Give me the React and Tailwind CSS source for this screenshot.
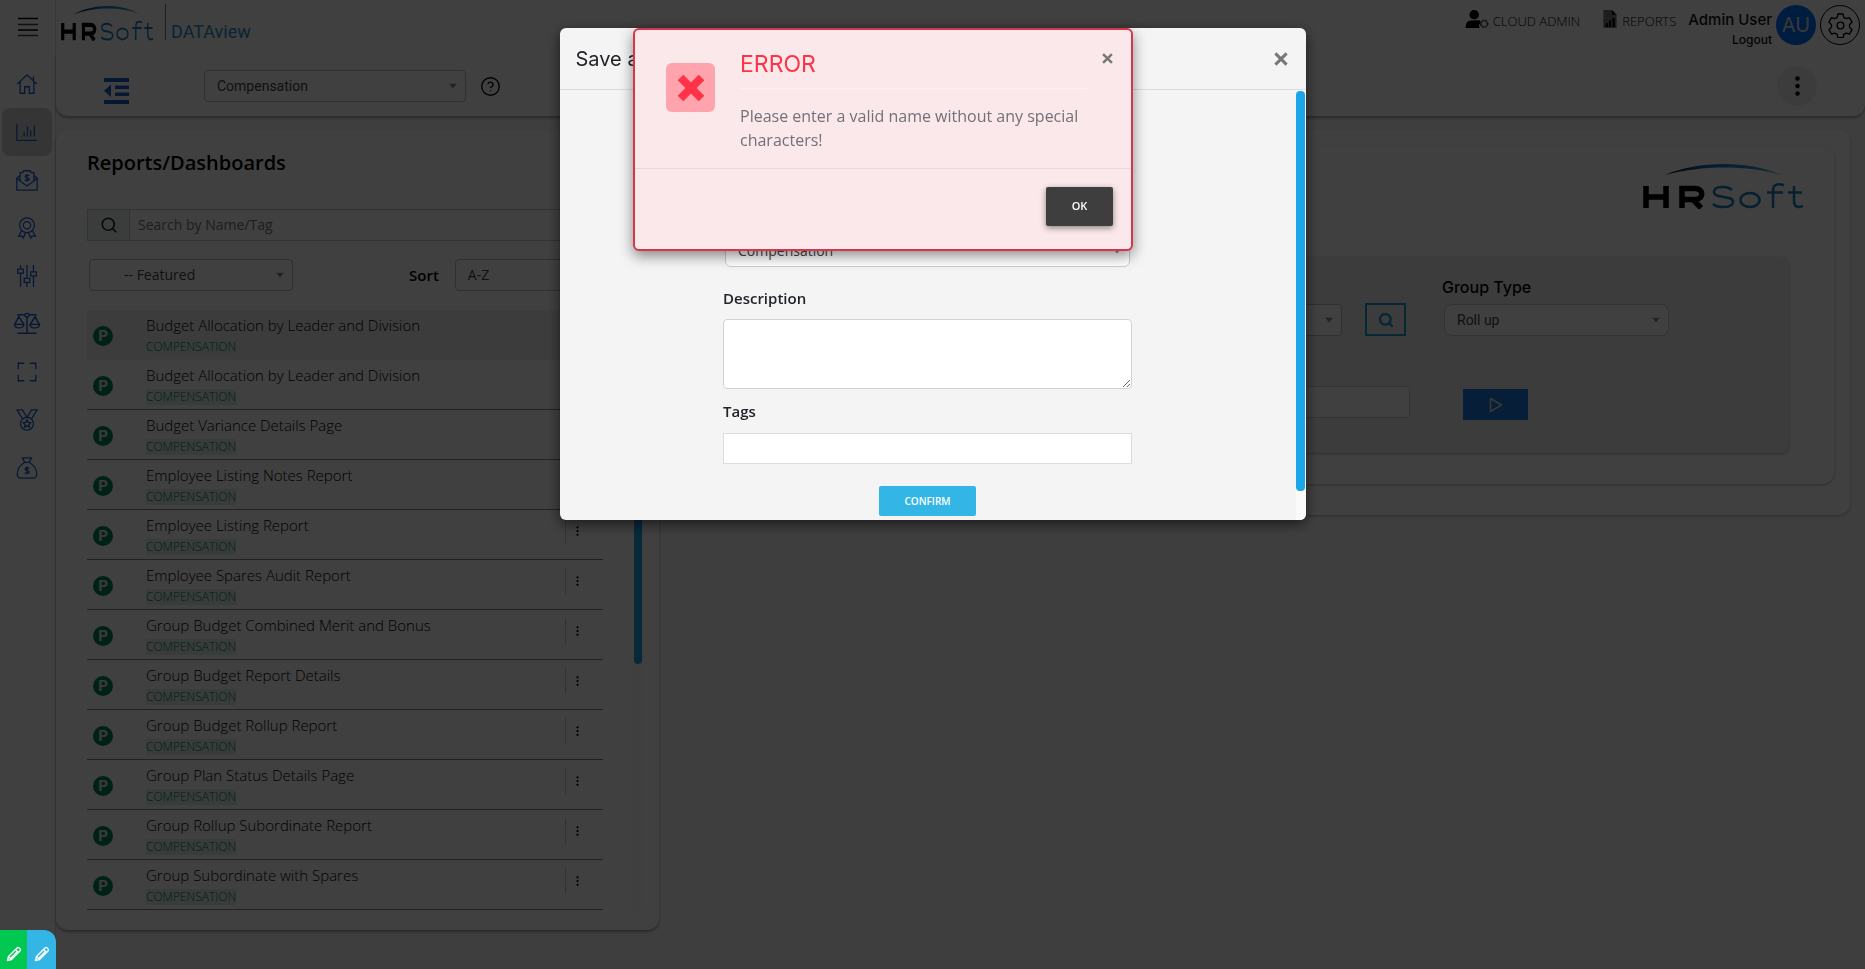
import React from "react";
import { Search, HelpCircle } from "lucide-react";

const reports = [
  "Budget Allocation by Leader and Division",
  "Budget Allocation by Leader and Division",
  "Budget Variance Details Page",
  "Employee Listing Notes Report",
  "Employee Listing Report",
  "Employee Spares Audit Report",
  "Group Budget Combined Merit and Bonus",
  "Group Budget Report Details",
  "Group Budget Rollup Report",
  "Group Plan Status Details Page",
  "Group Rollup Subordinate Report",
  "Group Subordinate with Spares",
];

const navIcons = [
  {
    name: "Home",
    art: <path d="M1.5 12 12 2l10.5 10M4.5 9.5V22h5v-7h5v7h5V9.5M19 4v4.5" />,
  },
  {
    name: "Dashboards",
    art: <path d="M1 3v18h22M6 16v1M9 12v5M12.500 6v11M16 10v7M20 5v12" />,
  },
  {
    name: "Pay letters",
    art: (
      <>
        <path d="M4.500 7 1 10v13h22V10l-3.500-3M1 10l7.500 6M23 10l-7.500 6M4.500 13V4h3l1-2h7l1 2h3v9L12 18.500z" />
        <path d="M14.500 7.500c-.5-1-4.500-1.300-4.500.7s4.500 1 4.500 3-4 2-5 .5M12 5.500v8" />
      </>
    ),
  },
  {
    name: "Awards",
    art: (
      <>
        <circle cx="12" cy="9" r="8" />
        <circle cx="12" cy="9" r="4" />
        <path d="m6 15-3 6 3.500-.5L8 23l2.500-6M18 15l3 6-3.500-.5L16 23l-2.500-6" />
      </>
    ),
  },
  {
    name: "Adjustments",
    art: (
      <>
        <path d="M5 0v4M5 9v15M12 0v14M12 19v5M19 0v7M19 12v12" />
        <rect x="2" y="4.500" width="6" height="4.500" />
        <rect x="9" y="14.500" width="6" height="4.500" />
        <rect x="16" y="7.500" width="6" height="4.500" />
      </>
    ),
  },
  {
    name: "Fairness",
    wide: true,
    art: (
      <>
        <path d="M3 2h7M14 2h7M12 4v18M3 22h18" />
        <circle cx="12" cy="2.500" r="2" />
        <path d="M4.500 4 .5 12.500h8.500zM19.500 4l-4.500 8.500h8.500z" />
        <path d="M.5 12.500c0 5 8.500 5 8.500 0M15 12.500c0 5 8.500 5 8.500 0" />
      </>
    ),
  },
  {
    name: "Full screen",
    art: <path d="M2.500 9V2.500H9M15 2.500h6.500V9M21.500 15v6.500H15M9 21.500H2.500V15" />,
  },
  {
    name: "Medals",
    art: (
      <>
        <path d="M1 1h6l5 8 5-8h6l-6 9.500M1 1l6 9.500" />
        <circle cx="12" cy="16" r="7" />
        <path d="m12 12 1.300 2.600 2.800.3-2 2 .5 2.800-2.600-1.400-2.600 1.400.5-2.800-2-2 2.800-.3z" />
      </>
    ),
  },
  {
    name: "Funding",
    art: (
      <>
        <path d="M7 1h10l-2.500 5h-5zM9.500 6C4 9 1.500 14 1.500 18.500 1.500 21.500 3 23 5.500 23h13c2.500 0 4-1.500 4-4.500C22.500 14 20 9 14.500 6z" />
        <path d="M14.500 12.500c-.5-1-4.500-1.300-4.500.8s4.500 1 4.500 3-4 2.200-5 .6M12 10.500v8" />
      </>
    ),
  },
];

function Logo({ className, id }) {
  return (
    <svg viewBox="0 0 160 46" preserveAspectRatio="none" className={className} role="img" aria-label="HRSoft">
      <defs>
        <linearGradient id={id} x1="0" x2="1" y1="0" y2="0">
          <stop offset="0" stopColor="#06101c" />
          <stop offset=".4" stopColor="#1673b8" />
          <stop offset=".75" stopColor="#2a8fc9" />
          <stop offset="1" stopColor="#7cc4b8" />
        </linearGradient>
      </defs>
      <path d="M22 12C55-2 105-3 138 12 105 2 58 2 22 12z" fill={`url(#${id})`} />
      <path d="M3 23v22M23 23v22M3 34h20M39 45V25.500h13c9 0 9 11 0 11H39M50 36.500l8 8.500" fill="none" stroke="#000" strokeWidth="5.500" />
      <path
        d="M89 27c-4-4-18-4.500-18 2 0 7 19 3 19 9.500 0 7.500-16 6.500-20 2.500M141 22c-8-2-11 0-11 6v17M124 29.500h16M151 23v15c0 6 4 7 9 5M145 29.500h14"
        fill="none"
        stroke="#1c80bd"
        strokeWidth="2.500"
      />
      <ellipse cx="107" cy="37" rx="9.500" ry="7" fill="none" stroke="#1c80bd" strokeWidth="2.500" />
    </svg>
  );
}

function Caret() {
  return (
    <svg viewBox="0 0 8 5" className="pointer-events-none absolute top-1/2 right-[9px] h-[5px] w-2 -translate-y-1/2 fill-[#888]">
      <path d="M0 0h8L4 5z" />
    </svg>
  );
}

function Select({ label, value, className, inner = "pl-3" }) {
  return (
    <div className={"relative " + className}>
      <select
        aria-label={label}
        className={"h-8 w-full appearance-none rounded border border-[#bbb] bg-white text-sm text-[#444] " + inner}
      >
        <option>{value}</option>
      </select>
      <Caret />
    </div>
  );
}

function Dots({ className }) {
  return (
    <svg viewBox="0 0 4 16" className={className}>
      <circle cx="2" cy="2" r="1.800" />
      <circle cx="2" cy="8" r="1.800" />
      <circle cx="2" cy="14" r="1.800" />
    </svg>
  );
}

function Cross({ className }) {
  return (
    <svg viewBox="0 0 10 10" className={className} fill="none" stroke="currentColor">
      <path d="m1 1 8 8M9 1 1 9" strokeWidth="2.200" />
    </svg>
  );
}

function Pencil() {
  return (
    <svg viewBox="0 0 16 16" className="size-4" fill="none" stroke="#fff" strokeWidth="1.400" strokeLinejoin="round">
      <path d="M1.500 14.500 2.500 10.500 11 2c1.500-1.500 4.500 1.500 3 3L5.500 13.500zM9.500 3.500l3 3M2.500 10.500l3 3M11 6l-6 6" />
    </svg>
  );
}

function Sidebar() {
  return (
    <nav className="flex w-14 shrink-0 flex-col border-r border-[#ddd] bg-white">
      <button aria-label="Menu" className="flex h-[54px] items-center justify-center">
        <svg viewBox="0 0 20 20" className="size-5" stroke="#000">
          <path d="M0 1.500h20M0 13h20" strokeWidth="1.600" />
          <path d="M0 7.500h20M0 18.500h20" strokeWidth="1.600" stroke="#444" />
        </svg>
      </button>
      <div className="flex flex-col pt-[6px]">
        {navIcons.map((n, i) => (
          <a
            key={n.name}
            href={"#nav-" + i}
            aria-label={n.name}
            className={
              "mr-[3px] ml-[2px] flex h-12 items-center justify-center rounded-lg " + (i === 1 ? "bg-[#d4d4d4]" : "")
            }
          >
            <svg
              viewBox="-1 -1 26 26"
              preserveAspectRatio="none"
              className={n.wide ? "h-6 w-7" : "h-6 w-6"}
              fill="none"
              stroke="#1f5fd0"
              strokeWidth="1.400"
            >
              {n.art}
            </svg>
          </a>
        ))}
      </div>
    </nav>
  );
}

function TopBar() {
  return (
    <header className="flex h-[54px] shrink-0 items-start bg-white">
      <Logo id="arc-small" className="mt-[5px] ml-[5px] h-9 w-[92px]" />
      <div className="mt-1 ml-3 flex h-9 items-end border-l border-[#777] pl-[5px] font-[Roboto] text-[18px] leading-4 text-[#2c8fca]">
        DATAview
      </div>
      <div className="ml-auto flex items-start pr-[5px]">
        <a href="#cloud" className="mt-[10px] flex items-start gap-[2px] text-[13px] leading-[22px] font-light text-black">
          <svg viewBox="0 0 26 20" className="h-[19px] w-[26px]">
            <circle cx="9" cy="5" r="5" />
            <path d="M0 19c0-9 5-8 9-8s7-1 7 3c-3 1-2 3-1 5z" />
            <circle cx="19.500" cy="14.500" r="3.500" fill="none" stroke="#555" strokeWidth="2" strokeDasharray="2.200 .6" />
          </svg>
          CLOUD ADMIN
        </a>
        <a href="#reports" className="mt-[10px] ml-[22px] flex items-start gap-1 text-[13px] leading-[22px] font-light text-black">
          <svg viewBox="0 0 16 20" className="h-[19px] w-4">
            <path d="M1 0h9l5 5v14H1z" fill="#777" />
            <path d="M10 0l5 5h-5zM3.500 14h2.500v4H3.500zM7 11h2v7H7zM10.500 8.500h2.500V18h-2.500z" />
          </svg>
          REPORTS
        </a>
        <div className="mt-[10px] ml-3 flex flex-col items-end font-[Inter] font-medium text-[#111]">
          <span className="text-[15px] leading-5">Admin User</span>
          <a href="#logout" className="text-[12px] leading-5">
            Logout
          </a>
        </div>
        <div className="mt-[5px] ml-1 flex size-10 items-center justify-center rounded-full bg-[#006fff] font-[Inter] text-[20px] text-[#ddd]">
          AU
        </div>
        <button aria-label="Settings" className="mt-[5px] ml-1 flex size-10 items-center justify-center rounded-full border border-black">
          <svg viewBox="0 0 24 24" className="size-[25px]" fill="none" stroke="#000" strokeWidth="1.300" strokeLinejoin="round">
            <path d="M9.500 1.500h5l.7 3.200 2.300 1.300 3.100-1 2.500 4.300-2.400 2.200v2.800l2.400 2.200-2.500 4.300-3.100-1-2.300 1.300-.7 3.200h-5l-.7-3.200L6.500 19.800l-3.100 1L.9 16.500l2.400-2.200v-2.800L.9 9.300 3.400 5l3.100 1 2.300-1.300z" transform="translate(0 -.5)" />
            <circle cx="12" cy="12" r="3.200" />
          </svg>
        </button>
      </div>
    </header>
  );
}

function ToolBar() {
  return (
    <div className="flex h-[62px] shrink-0 items-center rounded-b-xl bg-white pt-[2px] pr-12 pl-12 shadow-[0_2px_3px_rgba(0,0,0,0.35)]">
      <button aria-label="Collapse list">
        <svg viewBox="0 0 26 26" className="mt-[10px] size-[26px]" fill="#1a62c4">
          <path d="M0 0h25v4H0zM11 7.500h14v3.500H11zM11 14.500h14V18H11zM0 22h25v4H0zM7 6.500v12.500L0 12.750z" />
        </svg>
      </button>
      <Select label="Module" value="Compensation" className="ml-[74px] w-[262px] font-[Roboto]" />
      <HelpCircle className="ml-[14px] size-[21px] text-black" strokeWidth={1.500} />
      <button aria-label="More" className="ml-auto flex size-10 items-center justify-center rounded-full bg-[#f0f0f0]">
        <Dots className="h-5 w-[5px] fill-black" />
      </button>
    </div>
  );
}

function ReportList() {
  return (
    <section className="w-[603px] shrink-0 rounded-xl bg-white pt-[19px] pr-4 pb-5 pl-[31px] shadow-[0_2px_3px_rgba(0,0,0,0.35)]">
      <h2 className="text-[20px] leading-7 font-semibold text-black">Reports/Dashboards</h2>
      <div className="mt-8 mr-10 flex h-8 border border-[#c5cacc]">
        <span className="flex w-[42px] items-center justify-center border-r border-[#c5cacc] bg-[#e9eef0]">
          <Search className="size-[18px] text-[#222]" strokeWidth={2.200} />
        </span>
        <input aria-label="Search reports" placeholder="Search by Name/Tag" className="min-w-0 flex-1 bg-white px-2 text-sm placeholder:text-[#777]" />
      </div>
      <div className="mt-[18px] flex items-center pl-[2px]">
        <Select label="Filter" value="-- Featured" className="w-[204px]" inner="pl-[34px]" />
        <span className="ml-[116px] text-[15px] font-semibold text-black">Sort</span>
        <Select label="Sort" value="A-Z" className="ml-4 w-[148px]" />
      </div>
      <div className="mt-[19px] flex justify-between">
        <ul className="w-[516px]">
          {reports.map((r, i) => (
            <li key={i} className={"flex h-[50px] border-b " + (i === 0 ? "border-transparent bg-[#f0f0f0]" : "border-[#888]")}>
              <span className="mt-4 ml-[6px] flex size-5 items-center justify-center rounded-full bg-[#008456] font-[Inter] text-[15px] font-bold text-[#e4e4e4]">
                P
              </span>
              <div className="ml-[33px] flex flex-1 flex-col items-start">
                <a href={"#report-" + i} className="mt-[5px] text-[15px] leading-5 font-light text-black">
                  {r}
                </a>
                <span className="mt-[4px] bg-[#e0efe9] text-[12px] leading-4 font-light text-[#00794c]">COMPENSATION</span>
              </div>
              <button aria-label="Report actions" className="mt-2 flex h-[26px] w-[38px] items-center border-l border-[#ccc] pl-[10px]">
                <Dots className="h-[10px] w-[3px] fill-black" />
              </button>
            </li>
          ))}
        </ul>
        <div className="w-[10px] bg-[#fafafa] pl-px">
          <div className="h-[354px] w-2 rounded bg-[#1ca6e8]" />
        </div>
      </div>
    </section>
  );
}

function ReportPanel() {
  return (
    <section className="mr-[15px] min-w-0 flex-1 rounded-xl bg-white px-4 pt-4 pb-[31px] shadow-[0_1px_3px_rgba(0,0,0,0.3)]">
      <div className="rounded-xl bg-white pb-[31px] shadow-[0_1px_3px_rgba(0,0,0,0.3)]">
        <div className="flex justify-end pt-[17px] pr-[31px]">
          <Logo id="arc-large" className="h-[46px] w-[160px]" />
        </div>
        <div className="mt-12 mr-[45px] ml-[45px] h-[196px] rounded-lg bg-[#f0f0f0] pt-5 shadow-[0_1px_3px_rgba(0,0,0,0.3)]">
          <div className="flex">
            <div className="flex flex-1 items-end justify-end">
              <Select label="Group" value="" className="w-[225px]" />
              <button aria-label="Find group" className="mr-9 ml-[23px] flex h-[33px] w-[41px] items-center justify-center border-2 border-[#199bcf]">
                <Search className="size-4 text-[#199bcf]" strokeWidth={3.500} />
              </button>
            </div>
            <div className="w-[347px]">
              <label htmlFor="group-type" className="block font-[Inter] text-[16px] leading-5 font-medium text-black">
                Group Type
              </label>
              <div className="relative mt-[7px] ml-[2px] w-[225px]">
                <select id="group-type" className="h-8 w-full appearance-none rounded-lg border border-[#ccc] bg-white pl-3 font-[Roboto] text-sm text-[#444]">
                  <option>Roll up</option>
                </select>
                <Caret />
              </div>
            </div>
          </div>
          <div className="mt-[50px] flex justify-end">
            <input aria-label="Value" className="h-8 w-[320px] rounded border border-[#ccc] bg-white px-2" />
            <div className="w-[379px] pl-[53px]">
              <button aria-label="Run report" className="mt-[3px] flex h-[31px] w-[65px] items-center justify-center bg-[#1f78e0]">
                <svg viewBox="0 0 14 16" className="h-4 w-[14px]" fill="none" stroke="#ddd" strokeWidth="1.500" strokeLinejoin="round">
                  <path d="M1.500 1.500v13L12.500 8z" />
                </svg>
              </button>
            </div>
          </div>
        </div>
      </div>
    </section>
  );
}

function SaveDialog() {
  return (
    <div role="dialog" aria-label="Save" className="w-[746px] overflow-hidden rounded-md bg-[#f4f4f4] shadow-[0_4px_14px_rgba(0,0,0,0.6)]">
      <div className="flex h-[62px] items-center border-b border-[#dcdcdc] px-4 font-[Inter] text-[20px] text-[#212529]">
        Save as
        <button aria-label="Close" className="mr-[2px] ml-auto text-[#777]">
          <Cross className="size-[14px]" />
        </button>
      </div>
      <div className="flex h-[430px]">
        <div className="flex min-w-0 flex-1 flex-col items-center justify-end pb-1">
          <form className="flex w-[409px] flex-col text-[#212529]">
            <div className="relative mx-[2px]">
              <select aria-label="Module" className="h-8 w-full appearance-none rounded-md border border-[#ccc] bg-white pl-3 text-sm text-[#444]">
                <option>Compensation</option>
              </select>
              <Caret />
            </div>
            <label htmlFor="description" className="mt-[19px] text-[15px] leading-6 font-semibold">
              Description
            </label>
            <textarea id="description" className="mt-[9px] h-[70px] resize rounded border border-[#ced4da] bg-white" />
            <label htmlFor="tags" className="mt-[10px] text-[15px] leading-6 font-semibold">
              Tags
            </label>
            <input id="tags" className="mt-[10px] h-[31px] border border-[#dcdcdc] bg-white" />
            <button type="button" className="mt-[22px] h-[30px] w-[97px] self-center rounded-[2px] bg-[#33b5e5] text-[10px] font-semibold text-white">
              CONFIRM
            </button>
          </form>
        </div>
        <div className="w-[10px] bg-[#fafafa] pt-px pr-px">
          <div className="h-[400px] rounded bg-[#1ca6e8]" />
        </div>
      </div>
    </div>
  );
}

function ErrorDialog() {
  return (
    <div role="alertdialog" aria-labelledby="error-title" className="w-[500px] rounded-md border-2 border-[#d4364c] bg-[#fbe8ea] shadow-[0_5px_14px_rgba(0,0,0,0.45)]">
      <div className="flex h-[139px] border-b border-[#ead6d9] pr-[18px] pl-[31px]">
        <div className="mt-[33px] flex size-[49px] shrink-0 items-center justify-center rounded-md bg-[#ffa3ac]">
          <svg viewBox="0 0 28 28" className="size-7 text-[#ff3347]" fill="none" stroke="currentColor" strokeWidth="8">
            <path d="M3.500 3.500l21 21M24.500 3.500l-21 21" />
          </svg>
        </div>
        <div className="ml-[25px] w-[347px]">
          <h3 id="error-title" className="border-b border-[#fdf1f2] pt-[18px] pb-2 font-[Inter] text-[23px] leading-8 text-[#ff3347]">
            ERROR
          </h3>
          <p className="mt-[15px] text-[16px] leading-6 text-[#747078]">
            Please enter a valid name without any special characters!
          </p>
        </div>
        <button aria-label="Close error" className="mt-[23px] ml-auto size-[11px] text-[#777]">
          <Cross className="size-[11px]" />
        </button>
      </div>
      <div className="flex h-[80px] justify-end pt-[18px] pr-[18px]">
        <button className="h-[39px] w-[67px] rounded-[2px] bg-[#3e3e3e] text-[11px] font-semibold text-white shadow-[0_2px_6px_rgba(0,0,0,0.45)]">
          OK
        </button>
      </div>
    </div>
  );
}

export default function App() {
  return (
    <div className="flex min-h-screen bg-[#f8f8f8] font-['Open_Sans',sans-serif]">
      <Sidebar />
      <div className="flex min-w-0 flex-1 flex-col">
        <TopBar />
        <ToolBar />
        <main className="flex items-start gap-[10px] pt-[14px] pb-6">
          <ReportList />
          <ReportPanel />
        </main>
      </div>
      <div className="fixed inset-0 bg-black/75" />
      <div className="fixed inset-x-0 top-7 flex justify-center">
        <SaveDialog />
      </div>
      <div className="fixed inset-x-0 top-7 flex justify-center pr-[99px]">
        <ErrorDialog />
      </div>
      <div className="fixed bottom-0 left-0 flex h-[39px] w-14">
        <button aria-label="Edit page" className="flex w-[27px] items-center justify-center bg-[#00c851] pt-2">
          <Pencil />
        </button>
        <button aria-label="Edit report" className="flex flex-1 items-center justify-center rounded-tr-xl bg-[#33b5e5] pt-2">
          <Pencil />
        </button>
      </div>
    </div>
  );
}
